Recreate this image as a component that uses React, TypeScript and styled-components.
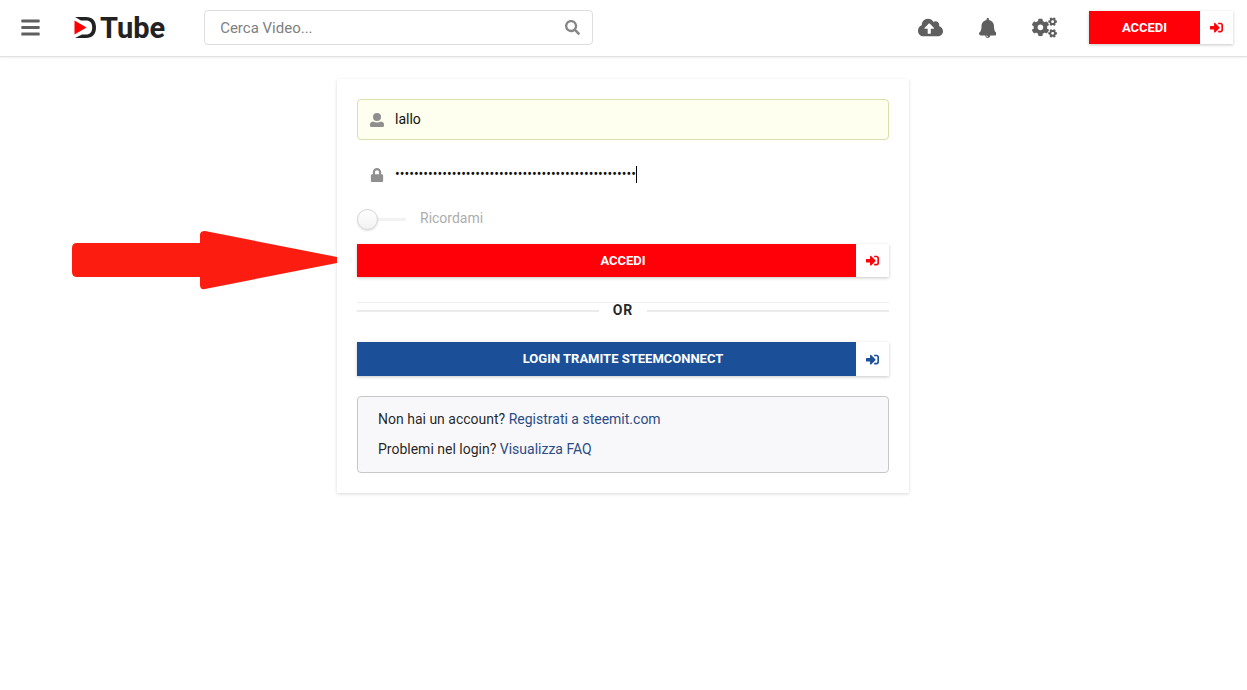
import React from "react";
import styled, { createGlobalStyle } from "styled-components";
import { FaBars, FaSearch, FaCloudUploadAlt, FaCogs, FaSignInAlt, FaLock } from "react-icons/fa";

const GlobalStyle = createGlobalStyle`
  *, *::before, *::after { box-sizing: border-box; }
  body {
    margin: 0;
    background: #fff;
    color: rgba(0, 0, 0, 0.87);
    font: 14px/20px Roboto, "Liberation Sans", sans-serif;
  }
  button, input { font-family: inherit; }
`;

const Header = styled.header`
  display: flex;
  align-items: center;
  height: 57px;
  padding: 0 14px 1px 20px;
  border-bottom: 1px solid #e2e2e3;
  box-shadow: 0 1px 2px rgba(34, 36, 38, 0.08);
`;

const IconButton = styled.button<{ $size: number }>`
  display: flex;
  padding: 0;
  border: 0;
  background: none;
  color: #5f5f5f;
  font-size: ${(p) => p.$size}px;
  cursor: pointer;
`;

const Logo = styled.a`
  display: flex;
  align-items: center;
  gap: 3px;
  margin: 0 39px 0 33px;
  color: #222;
  font-size: 29px;
  line-height: 36px;
  font-weight: 700;
  text-decoration: none;
`;

const SearchBox = styled.form`
  display: flex;
  align-items: center;
  flex: 0 1 389px;
  height: 35px;
  padding: 0 12px 0 15px;
  border: 1px solid #dededf;
  border-radius: 4px;
`;

const SearchInput = styled.input`
  flex: 1;
  min-width: 0;
  padding: 0;
  border: 0;
  outline: 0;
  background: none;
  font-size: 15px;
  &::placeholder { color: #808080; opacity: 1; }
`;

const Actions = styled.nav`
  display: flex;
  align-items: center;
  gap: 36px;
  margin: 0 32px 0 auto;
`;

const LoginButton = styled.button<{ $color: string; $width: string; $height: number }>`
  display: flex;
  width: ${(p) => p.$width};
  height: ${(p) => p.$height}px;
  padding: 0;
  border: 0;
  background: #fff;
  color: ${(p) => p.$color};
  box-shadow: 0 1px 3px rgba(0, 0, 0, 0.22);
  line-height: ${(p) => p.$height}px;
  cursor: pointer;
`;

const ButtonText = styled.span<{ $color: string; $inset: number }>`
  flex: 1;
  padding-left: ${(p) => p.$inset}px;
  background: ${(p) => p.$color};
  color: #fff;
  font-size: 13px;
  font-weight: 700;
`;

const ButtonIcon = styled.span`
  display: flex;
  align-items: center;
  align-self: center;
  justify-content: center;
  width: 33px;
  font-size: 13px;
`;

const Page = styled.main`
  padding: 22px 15px 22px 14px;
`;

const Card = styled.section`
  position: relative;
  max-width: 572px;
  margin: 0 auto;
  padding: 20px;
  box-shadow: 0 1px 3px rgba(0, 0, 0, 0.16);
`;

const Pointer = styled.svg`
  position: absolute;
  right: 100%;
  top: 152px;
`;

const Field = styled.label<{ $filled?: boolean }>`
  display: flex;
  align-items: center;
  height: 41px;
  margin-bottom: 14px;
  padding: 0 12px;
  border: 1px solid ${(p) => (p.$filled ? "#dbdfae" : "transparent")};
  border-radius: 4px;
  background: ${(p) => (p.$filled ? "#feffee" : "none")};
  color: #8f8f8f;
`;

const FieldIcon = styled.span`
  display: flex;
  justify-content: center;
  width: 14px;
  margin-right: 11px;
  font-size: 14px;
`;

const FieldInput = styled.input<{ $fit?: boolean }>`
  flex: ${(p) => (p.$fit ? "0 1 auto" : "1")};
  field-sizing: ${(p) => (p.$fit ? "content" : "fixed")};
  min-width: 0;
  padding: 0 0 2px;
  border: 0;
  outline: 0;
  background: none;
  color: #111;
  font-size: 14px;
  line-height: 20px;
`;

const Caret = styled.span`
  width: 1px;
  height: 17px;
  background: #000;
`;

const Remember = styled.label`
  display: flex;
  align-items: center;
  gap: 14px;
  height: 21px;
  margin-bottom: 14px;
  color: #adadad;
`;

const Toggle = styled.input`
  appearance: none;
  display: flex;
  align-items: center;
  width: 49px;
  height: 21px;
  margin: 0;
  background: linear-gradient(#f2f2f2, #f2f2f2) center / 100% 3px no-repeat;
  &::before {
    content: "";
    width: 21px;
    height: 21px;
    border: 1px solid #d4d4d5;
    border-radius: 50%;
    background: linear-gradient(#fff, #f2f2f2);
    box-shadow: 0 1px 2px rgba(34, 36, 38, 0.15);
  }
`;

const RaisedText = styled.span`
  padding-bottom: 3px;
`;

const Divider = styled.div`
  display: flex;
  align-items: center;
  gap: 14px;
  height: 17px;
  margin: 25px 0 23px;
  border-top: 1px solid #eee;
  font-weight: 700;
  letter-spacing: 1px;
  &::before, &::after {
    content: "";
    flex: 1;
    height: 2px;
    background: #ebebeb;
  }
`;

const Message = styled.section`
  margin-top: 20px;
  padding: 12px 20px 13px;
  border: 1px solid #c6c7c8;
  border-radius: 4px;
  background: #f8f8fa;
`;

const Line = styled.p`
  margin: 0;
  line-height: 20px;
  & + & { margin-top: 10px; }
  a { color: #2b4c85; text-decoration: none; }
`;

const RED = "#ff0008";
const BLUE = "#1b5099";

interface SignInProps {
  label: string;
  color: string;
  width?: string;
  height?: number;
  inset?: number;
}

function SignIn({ label, color, width = "100%", height = 33, inset = 33 }: SignInProps) {
  return (
    <LoginButton type="button" $color={color} $width={width} $height={height}>
      <ButtonText $color={color} $inset={inset}>{label}</ButtonText>
      <ButtonIcon><FaSignInAlt /></ButtonIcon>
    </LoginButton>
  );
}

function Bell() {
  return (
    <svg height="1em" viewBox="0 0 448 512" fill="currentColor" aria-hidden="true">
      <path d="M433.884 366.059C411.634 343.809 384 316.118 384 208c0-79.394-57.831-145.269-133.663-157.830A31.845 31.845 0 0 0 256 32c0-17.673-14.327-32-32-32s-32 14.327-32 32c0 6.750 2.095 13.008 5.663 18.170C121.831 62.731 64 128.606 64 208c0 108.118-27.643 135.809-49.893 158.059C-16.042 396.208 5.325 448 48.048 448H160c0 35.346 28.654 64 64 64s64-28.654 64-64h111.943c42.638 0 64.151-51.731 33.941-81.941zM224 472a8 8 0 0 1 0 16c-22.056 0-40-17.944-40-40h16c0 13.234 10.766 24 24 24z" />
    </svg>
  );
}

export default function App() {
  return (
    <>
      <GlobalStyle />
      <Header>
        <IconButton type="button" $size={21} aria-label="Menu"><FaBars /></IconButton>
        <Logo href="#">
          <svg width="23" height="23" viewBox="0 0 23 23" aria-hidden="true">
            <path fill="#222" d="M1 1h11c6.500 0 10 4 10 10.500S18.500 22 12 22H1l7-3.500h4c4 0 6.200-2.500 6.200-7s-2.200-7-6.200-7H7z" />
            <path fill="#f00" d="M0.500 4.500l12 7-12 7z" />
          </svg>
          <span>Tube</span>
        </Logo>
        <SearchBox>
          <SearchInput type="text" placeholder="Cerca Video..." aria-label="Cerca Video" />
          <IconButton type="button" $size={15} aria-label="Cerca"><FaSearch color="#868686" /></IconButton>
        </SearchBox>
        <Actions>
          <IconButton type="button" $size={25} aria-label="Carica"><FaCloudUploadAlt /></IconButton>
          <IconButton type="button" $size={20} aria-label="Notifiche"><Bell /></IconButton>
          <IconButton type="button" $size={25} aria-label="Impostazioni"><FaCogs /></IconButton>
        </Actions>
        <SignIn label="ACCEDI" color={RED} width="144px" inset={0} />
      </Header>
      <Page>
        <Card>
          <Pointer width="265" height="60" viewBox="0 0 265 60" aria-hidden="true">
            <path fill="#fd1d10" d="M5 12H128V4Q128 0 133 0L265 26V32L133 58Q128 59 128 54V46H5Q0 46 0 41V17Q0 12 5 12Z" />
          </Pointer>
          <Field $filled>
            <FieldIcon>
              <svg width="14" height="14" viewBox="0 0 14 14" fill="currentColor" aria-hidden="true">
                <circle cx="7" cy="4" r="4" />
                <path d="M3 8.500Q7 10.500 11 8.500Q14 9 14 11.500V12.500Q14 14 12.500 14H1.500Q0 14 0 12.500V11.500Q0 9 3 8.500Z" />
              </svg>
            </FieldIcon>
            <FieldInput type="text" defaultValue="lallo" aria-label="Nome utente" />
          </Field>
          <Field>
            <FieldIcon><FaLock /></FieldIcon>
            <FieldInput $fit type="password" defaultValue={"x".repeat(51)} aria-label="Password" />
            <Caret />
          </Field>
          <Remember>
            <Toggle type="checkbox" />
            <RaisedText>Ricordami</RaisedText>
          </Remember>
          <SignIn label="ACCEDI" color={RED} />
          <Divider><RaisedText>OR</RaisedText></Divider>
          <SignIn label="LOGIN TRAMITE STEEMCONNECT" color={BLUE} height={34} />
          <Message>
            <Line>Non hai un account? <a href="#">Registrati a steemit.com</a></Line>
            <Line>Problemi nel login? <a href="#">Visualizza FAQ</a></Line>
          </Message>
        </Card>
      </Page>
    </>
  );
}
